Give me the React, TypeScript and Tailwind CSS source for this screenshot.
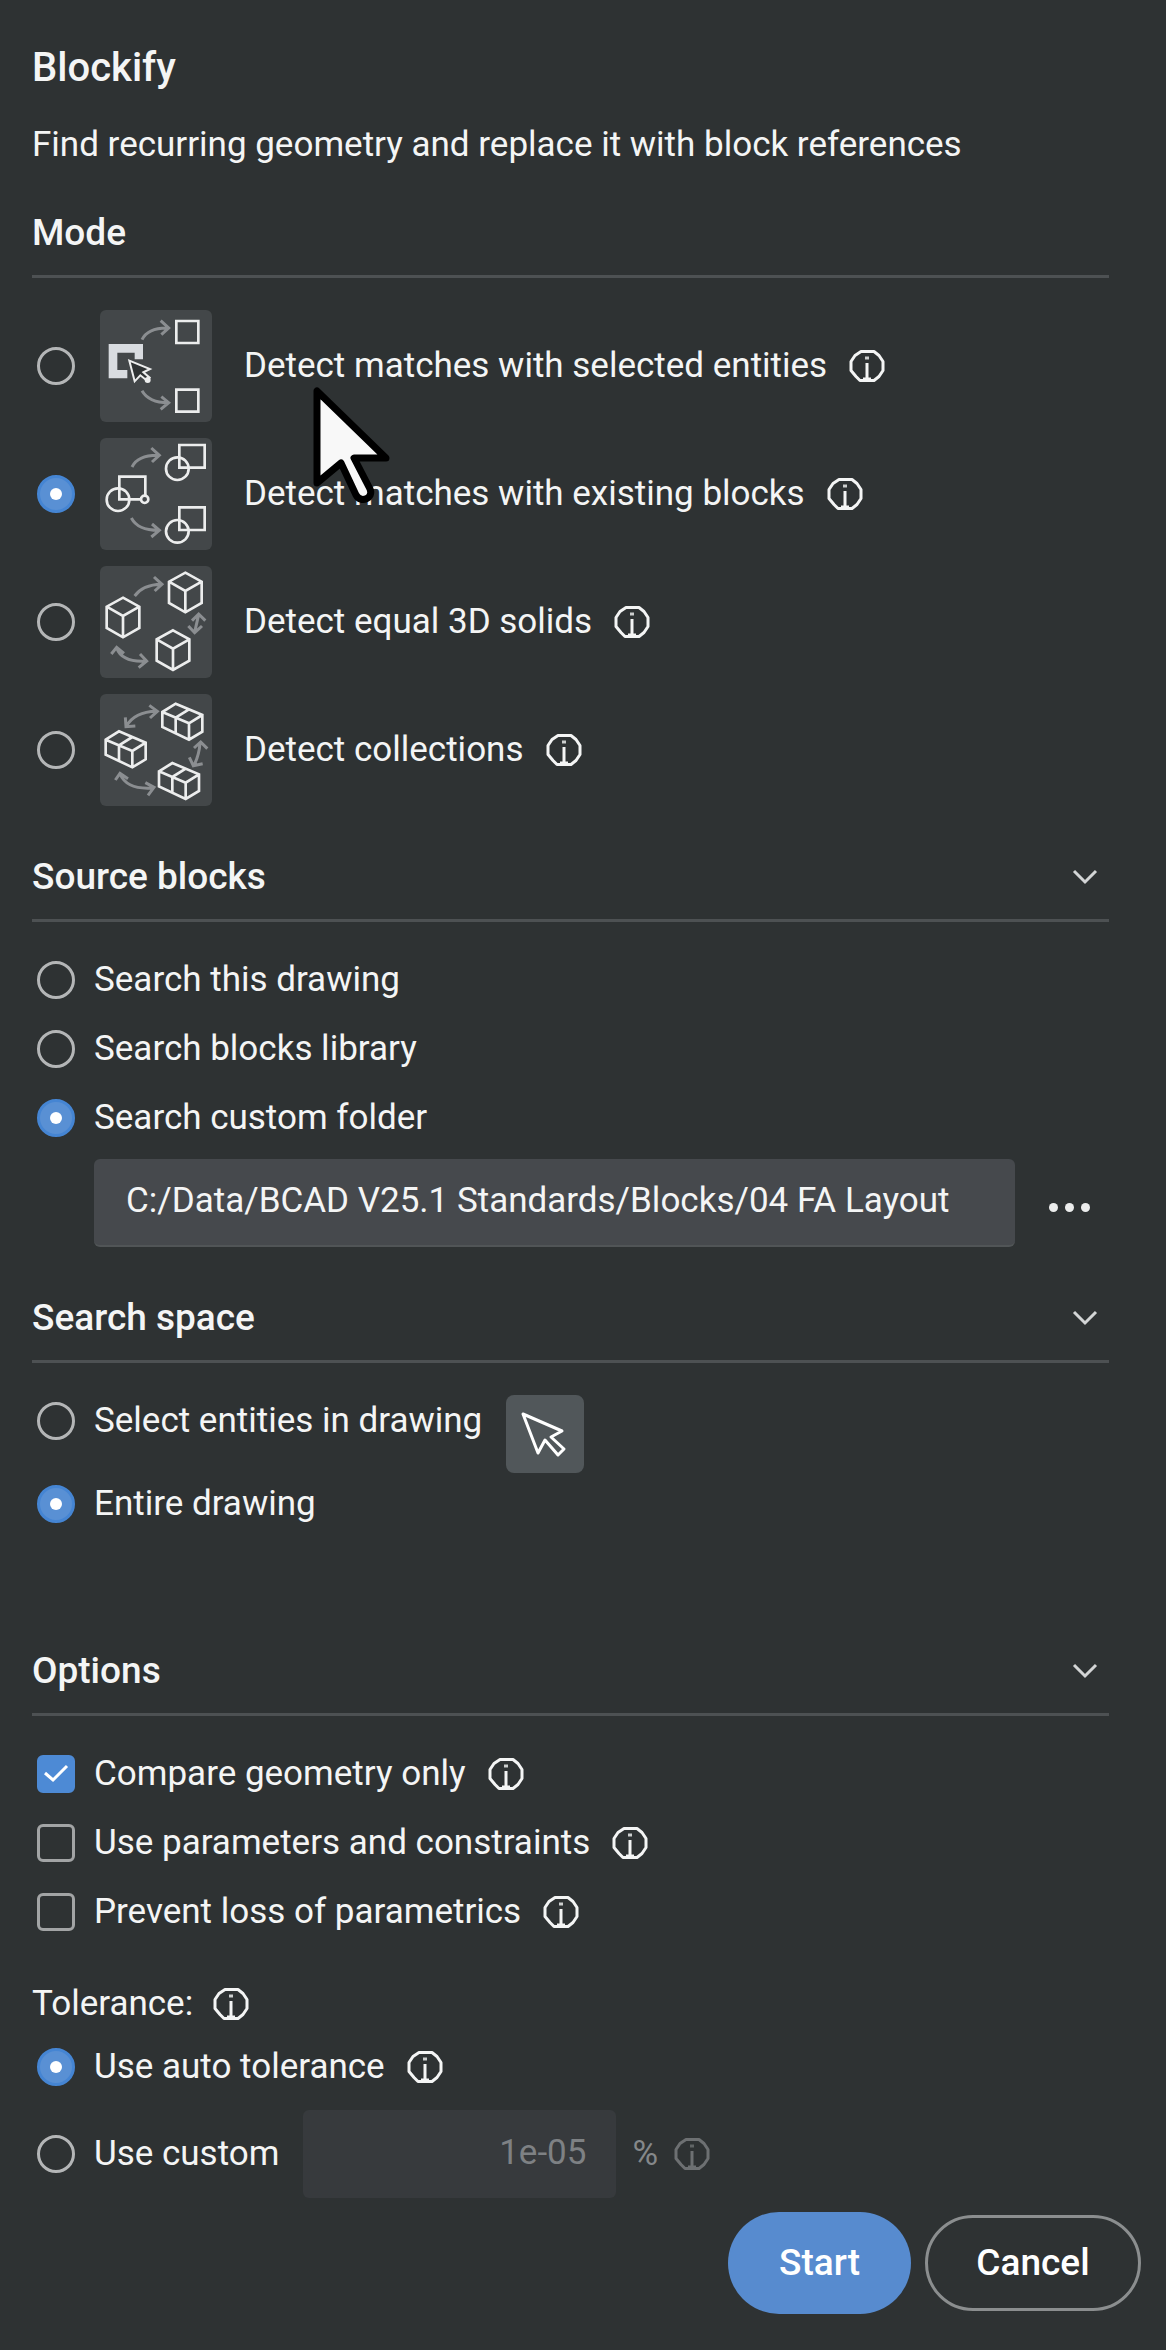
import type { InputHTMLAttributes, ReactNode } from "react";

const InfoIcon = ({ muted = false }: { muted?: boolean }) => (
  <button
    type="button"
    aria-label="More information"
    className={`shrink-0 ${muted ? "text-[#6d7072]" : "text-[#f4f5f5]"}`}
  >
    <svg className="h-[34px] w-9" viewBox="0 0 36 34" fill="none" stroke="currentColor">
      <path
        d="M12 2.5h13l5 4 4 6v9l-4 6-5 4H11l-4-4-5-6v-9l4-6z"
        strokeWidth="3"
        strokeLinejoin="round"
      />
      <path d="M18 14v17" strokeWidth="3" />
      <path d="M14 30h8" strokeWidth="3" />
      <path d="M16 9h4" strokeWidth="3" opacity=".8" />
    </svg>
  </button>
);

const Radio = (props: InputHTMLAttributes<HTMLInputElement>) => (
  <input
    type="radio"
    className="grid size-[38px] shrink-0 appearance-none place-items-center rounded-full border-3 border-[#b4b6b7] checked:border-[#4585d3] checked:bg-[#5990d4] checked:before:size-3 checked:before:rounded-full checked:before:bg-white"
    {...props}
  />
);

const Checkbox = (props: InputHTMLAttributes<HTMLInputElement>) => (
  <span className="grid shrink-0 place-items-center">
    <input
      type="checkbox"
      className="peer col-start-1 row-start-1 size-[38px] appearance-none rounded-md border-3 border-[#a2a4a5] checked:border-[#4d8ad5] checked:bg-[#4d8ad5]"
      {...props}
    />
    <svg
      className="pointer-events-none invisible col-start-1 row-start-1 size-[38px] peer-checked:visible"
      viewBox="0 0 38 38"
      fill="none"
      stroke="#fff"
      strokeWidth="3"
    >
      <path d="M8 18l8 7 14-14" />
    </svg>
  </span>
);

const SectionHeading = ({ title, collapsible = true }: { title: string; collapsible?: boolean }) => (
  <div className="mr-[25px] flex items-center justify-between border-b-3 border-[#4d5153] pb-[18px]">
    <h2 className="text-[37px] leading-12 font-medium">{title}</h2>
    {collapsible && (
      <button type="button" aria-label={`Collapse ${title}`} className="mr-2.5">
        <svg className="h-6 w-7" viewBox="0 0 28 24" fill="none" stroke="#d3d5d6" strokeWidth="3">
          <path d="M3 6l11 11L25 6" />
        </svg>
      </button>
    )}
  </div>
);

// Quarter-turn arrows that link the shapes inside the mode thumbnails
const Arrows = ({ children }: { children: ReactNode }) => (
  <g stroke="#8b8e91" strokeWidth="9">
    {children}
  </g>
);

const SelectedEntitiesIcon = () => (
  <>
    <Arrows>
      <path d="M126 89c12-24 37-36 78-35M182 32l24 22-22 20M126 242c14 24 38 36 78 36M184 260l22 18-24 20" />
    </Arrows>
    <path d="M26 102h103v46h-25v-20H52v52h30v25H26z" fill="#d9dce0" stroke="none" />
    <path d="M88 152l16 62 17-18 20 16 8-9-19-16 20-10z" fill="#2e3233" strokeWidth="6" />
    <circle cx="143" cy="210" r="9" fill="#eceded" stroke="none" />
    <path d="M229 33h66v66h-66zM229 239h66v66h-66z" />
  </>
);

const ExistingBlocksIcon = () => (
  <>
    <Arrows>
      <path d="M96 87c12-24 37-36 80-35M154 30l24 22-22 20M94 240c14 26 38 37 82 37M156 258l22 19-24 20" />
    </Arrows>
    <path d="M238 21h76v68h-76zM58 116h78v68H58zM238 208h76v68h-76z" />
    <circle cx="232" cy="92" r="34" />
    <circle cx="54" cy="185" r="34" />
    <circle cx="232" cy="280" r="34" />
    <circle cx="134" cy="184" r="11" fill="#45494c" />
  </>
);

const cube = "M0 0l49 27v64L0 119l-49-28V27zM-49 27L0 55l49-28M0 55v64";

const SolidsIcon = () => (
  <>
    <Arrows>
      <path d="M104 90c16-22 40-34 80-35M162 33l24 22-22 20" />
      <path d="M276 164l20-20 20 20M265 180l19 20 22-20M296 146c-4 18-8 34-12 52" />
      <path d="M34 264l16-20 22 18M50 246c10 28 38 42 88 39M120 264l20 21-24 20" />
    </Arrows>
    <path d={cube} transform="translate(256 20)" />
    <path d={cube} transform="translate(69 95)" />
    <path d={cube} transform="translate(219 193)" />
  </>
);

const doubleCube =
  "M0 25L40 0l80 34v50l-40 24L0 70zM0 25l80 34 40-25M80 59v49M40 42v46M40 42l40-25";

const CollectionsIcon = () => (
  <>
    <Arrows>
      <path d="M79 97c16-28 44-44 90-45M76 70l2 28 28-2M148 34l24 18-22 20" />
      <path d="M282 162l20-18 20 20M300 148c-2 26-8 46-18 66M268 190l12 25 28-6" />
      <path d="M46 258l14-20 24 16M60 240c14 32 44 46 98 42M136 266l26 14-18 24" />
    </Arrows>
    <path d={doubleCube} transform="translate(187 29)" />
    <path d={doubleCube} transform="translate(17 112)" />
    <path d={doubleCube} transform="translate(177 207)" />
  </>
);

const modes = [
  { id: "selected", text: "Detect matches with selected entities", Icon: SelectedEntitiesIcon },
  { id: "existing", text: "Detect matches with existing blocks", Icon: ExistingBlocksIcon },
  { id: "solids", text: "Detect equal 3D solids", Icon: SolidsIcon },
  { id: "collections", text: "Detect collections", Icon: CollectionsIcon },
];

const sources = [
  { id: "this-drawing", text: "Search this drawing" },
  { id: "library", text: "Search blocks library" },
  { id: "folder", text: "Search custom folder" },
];

const options = [
  { id: "geometry", text: "Compare geometry only", checked: true },
  { id: "parameters", text: "Use parameters and constraints", checked: false },
  { id: "parametrics", text: "Prevent loss of parametrics", checked: false },
];

const Pointer = () => (
  <svg
    className="pointer-events-none absolute top-[75px] left-[278px] h-[126px] w-[86px]"
    viewBox="0 0 86 126"
    fill="#f8f8f8"
    stroke="#000"
    strokeWidth="7"
    strokeLinejoin="round"
  >
    <path d="M7 6v92l24-20 15 32c5 9 18 3 14-6L44 73h32z" />
  </svg>
);

export default function App() {
  return (
    <main className="min-h-screen bg-[#2e3233] pt-11 pr-8 pb-8 pl-8 font-['Roboto',sans-serif] text-[35px] leading-12 text-[#f4f5f5]">
      <h1 className="text-[40px] leading-12 font-medium">Blockify</h1>
      <p className="mt-[29px]">Find recurring geometry and replace it with block references</p>

      <section className="mt-10">
        <SectionHeading title="Mode" collapsible={false} />
        <div className="relative mt-8 flex flex-col gap-4">
          {modes.map(({ id, text, Icon }) => (
            <div key={id} className="flex items-center gap-[22px] pl-[5px]">
              <label className="flex items-center">
                <Radio name="mode" defaultChecked={id === "existing"} />
                <svg
                  className="mr-8 ml-[25px] size-28 shrink-0 rounded-md bg-[#434749]"
                  viewBox="0 0 336 336"
                  fill="none"
                  stroke="#eceded"
                  strokeWidth="8"
                >
                  <Icon />
                </svg>
                {text}
              </label>
              <InfoIcon />
            </div>
          ))}
          <Pointer />
        </div>
      </section>

      <section className="mt-[47px]">
        <SectionHeading title="Source blocks" />
        <div className="mt-[34px] flex flex-col items-start gap-[21px] pl-[5px]">
          {sources.map(({ id, text }) => (
            <label key={id} className="flex items-center gap-[19px]">
              <Radio name="source" defaultChecked={id === "folder"} />
              {text}
            </label>
          ))}
        </div>
        <div className="mt-[17px] mr-11 flex items-center gap-[34px] pl-[62px]">
          <input
            type="text"
            aria-label="Custom folder"
            defaultValue="C:/Data/BCAD V25.1 Standards/Blocks/04 FA Layout"
            className="h-[88px] min-w-0 flex-1 rounded-md border-b-2 border-[#515557] bg-[#46494d] px-8 pb-1"
          />
          <button type="button" aria-label="Browse" className="flex gap-[7px] pt-2">
            <span className="size-[9px] rounded-full bg-[#eceded]" />
            <span className="size-[9px] rounded-full bg-[#eceded]" />
            <span className="size-[9px] rounded-full bg-[#eceded]" />
          </button>
        </div>
      </section>

      <section className="mt-[47px]">
        <SectionHeading title="Search space" />
        <div className="mt-8 flex items-start gap-6 pl-[5px]">
          <label className="flex items-center gap-[19px] leading-[52px]">
            <Radio name="space" />
            Select entities in drawing
          </label>
          <button
            type="button"
            aria-label="Select entities"
            className="grid size-[78px] place-items-center rounded-lg bg-[#51575a]"
          >
            <svg className="size-[78px]" viewBox="0 0 78 78" fill="none" stroke="#fff" strokeWidth="3">
              <path d="M17 19l15 39 7-13 13 15 6-6-13-12 11-6z" strokeLinejoin="round" />
            </svg>
          </button>
        </div>
        <label className="mt-[7px] flex items-center gap-[19px] pl-[5px]">
          <Radio name="space" defaultChecked />
          Entire drawing
        </label>
      </section>

      <section className="mt-[119px]">
        <SectionHeading title="Options" />
        <div className="mt-[34px] flex flex-col gap-[21px] pl-[5px]">
          {options.map(({ id, text, checked }) => (
            <div key={id} className="flex items-center gap-[22px]">
              <label className="flex items-center gap-[19px]">
                <Checkbox defaultChecked={checked} />
                {text}
              </label>
              <InfoIcon />
            </div>
          ))}
        </div>

        <div className="mt-11 flex items-center gap-5">
          <span>Tolerance:</span>
          <InfoIcon />
        </div>
        <div className="mt-[15px] flex items-center gap-[22px] pl-[5px]">
          <label className="flex items-center gap-[19px]">
            <Radio name="tolerance" defaultChecked />
            Use auto tolerance
          </label>
          <InfoIcon />
        </div>
        <div className="mt-[19px] flex items-center pl-[5px]">
          <label className="flex items-center gap-[19px]">
            <Radio name="tolerance" />
            Use custom
          </label>
          <input
            type="text"
            aria-label="Custom tolerance"
            disabled
            defaultValue="1e-05"
            className="ml-6 h-[88px] w-[313px] rounded-md bg-[#373a3d] px-[30px] pb-1 text-right text-[#7e8184]"
          />
          <span className="mr-4 ml-4 text-[#85888a]">%</span>
          <InfoIcon muted />
        </div>
      </section>

      <div className="mt-3.5 -mr-[7px] flex items-center justify-end gap-3.5 font-medium">
        <button type="button" className="h-[102px] w-[183px] rounded-full bg-[#578bcf] text-[37px] text-white">
          Start
        </button>
        <button
          type="button"
          className="h-24 w-[216px] rounded-full border-3 border-[#8b8e8f] text-[37px] text-white"
        >
          Cancel
        </button>
      </div>
    </main>
  );
}
